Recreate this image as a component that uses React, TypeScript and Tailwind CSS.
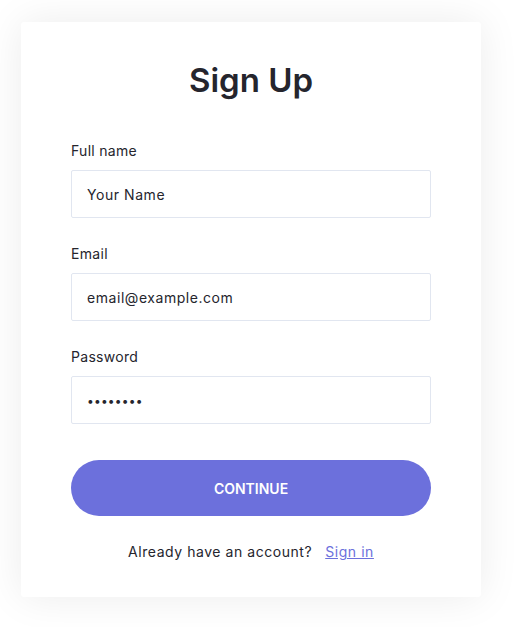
export default function App() {
  const fields = [
    { label: "Full name", value: "Your Name", type: "text" },
    { label: "Email", value: "email@example.com", type: "email" },
    { label: "Password", value: "password", type: "password" },
  ];

  return (
    <div className="min-h-screen bg-white pt-[22px] font-['Inter',sans-serif] text-[#25252d]">
      <div className="ml-[21px] w-[460px] rounded-[3px] bg-white px-[50px] pt-[38px] pb-[35px] shadow-[0_0_40px_rgba(0,0,0,0.08)]">
        <h1 className="text-center text-[33px] leading-[40px] font-semibold">Sign Up</h1>

        <form className="mt-[40px]">
          {fields.map((f) => (
            <div key={f.label} className="mb-[25px]">
              <label className="block text-[14px] leading-[21px] tracking-[0.3px]">{f.label}</label>
              <input
                type={f.type}
                defaultValue={f.value}
                readOnly
                className={
                  "mt-[9px] block h-[48px] w-full rounded-[2px] border border-[#e1e6f0] px-[15px] outline-none " +
                  (f.type === "password" ? "text-[12px] tracking-[0.2px]" : "text-[14px] tracking-[0.55px]")
                }
              />
            </div>
          ))}

          <button
            type="button"
            className="mt-[11px] h-[56px] w-full rounded-full bg-[#6c70dc] text-[14px] font-semibold text-white"
          >
            CONTINUE
          </button>
        </form>

        <p className="mt-[25px] text-center text-[14px] leading-[21px] tracking-[0.55px]">
          Already have an account?
          <a href="#" className="ml-[13px] text-[#6c70dc] underline">
            Sign in
          </a>
        </p>
      </div>
    </div>
  );
}
